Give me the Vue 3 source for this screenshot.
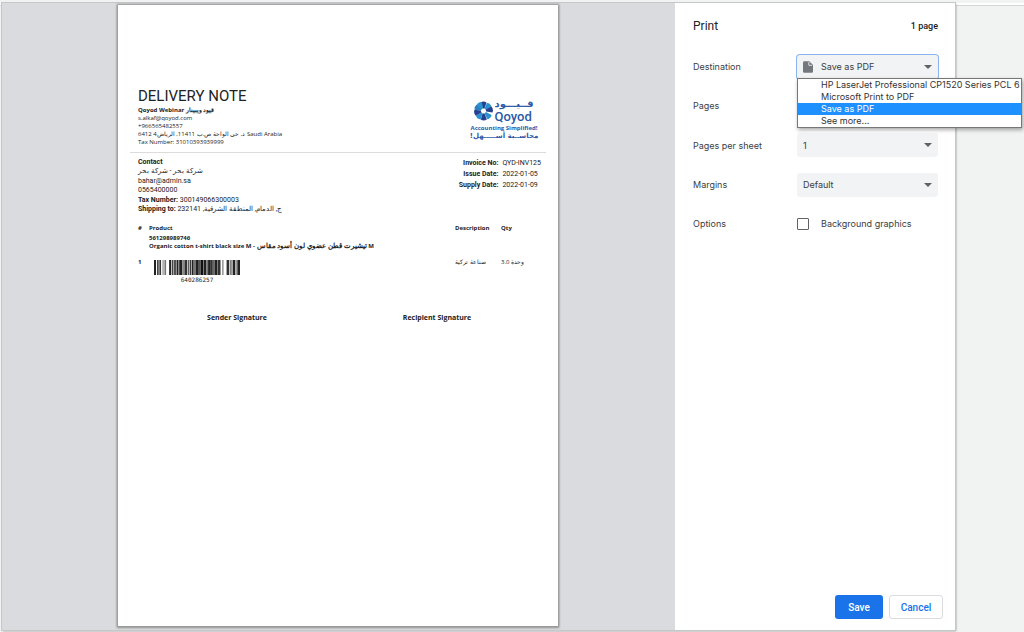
<script setup>
import { ref } from 'vue'

const printers = [
  'HP LaserJet Professional CP1520 Series PCL 6',
  'Microsoft Print to PDF',
  'Save as PDF',
  'See more...',
]
const destination = ref('Save as PDF')
const perSheet = ref('1')
const margins = ref('Default')
const background = ref(false)

// Logo petals: [rotation in degrees, colour]
const petals = [
  [0, '#263f8f'], [42, '#2a93cf'], [80, '#263f8f'], [135, '#2a93cf'],
  [178, '#263f8f'], [218, '#2a93cf'], [258, '#263f8f'], [298, '#2a7fc0'], [330, '#2a93cf'],
]

// Barcode bars: [start, width, colour]
const bars = [
  [0, 6, '#222'], [9, 5, '#444'], [16, 5, '#333'], [25, 4, '#999'], [31, 5, '#777'],
  [45, 6, '#222'], [53, 5, '#444'], [60, 5, '#333'], [67, 6, '#222'], [75, 9, '#222'],
  [84, 7, '#888'], [91, 8, '#333'], [101, 3, '#555'], [106, 4, '#333'], [112, 6, '#222'],
  [119, 5, '#777'], [124, 7, '#222'], [131, 6, '#555'], [138, 9, '#111'], [148, 8, '#222'],
  [156, 5, '#777'], [161, 8, '#222'], [169, 6, '#333'], [175, 6, '#666'], [181, 8, '#222'],
  [190, 8, '#333'], [203, 4, '#888'], [216, 8, '#333'], [227, 4, '#555'], [234, 8, '#222'],
  [243, 4, '#999'], [248, 8, '#222'],
]
</script>

<template>
  <div class="screen">
    <div class="dialog">
      <main class="preview">
        <article class="paper">
          <header class="head">
            <div class="company">
              <h1>DELIVERY NOTE</h1>
              <strong>Qoyod Webinar <bdi>قيود ويبينار</bdi></strong>
              <span>s.alkaf@qoyod.com</span>
              <span>+966565482557</span>
              <span>6412 <bdi dir="rtl">د, حي الواحة ص.ب 11411, الرياض4</bdi> Saudi Arabia</span>
              <span>Tax Number: 31010393939999</span>
            </div>
            <div class="logo">
              <div class="brand">
                <svg viewBox="-19 -20 38 40" class="mark" aria-hidden="true">
                  <path v-for="p in petals" :key="p[0]" d="M-2 -5 L-6 -17 Q0 -21 6 -17 L2 -5 Z" :transform="`rotate(${p[0]})`" :fill="p[1]" />
                </svg>
                <div class="names">
                  <span class="name-ar" lang="ar" dir="rtl">قــيـــود</span>
                  <span class="name-en">Qoyod</span>
                </div>
              </div>
              <span class="slogan">Accounting Simplified!</span>
              <span class="slogan-ar" lang="ar" dir="rtl">محاســبة أســـــهل!</span>
            </div>
          </header>

          <section class="details">
            <div class="contact">
              <strong>Contact</strong>
              <span><bdi>شركة بحر - شركة بحر</bdi></span>
              <span>bahar@admin.sa</span>
              <span>0565400000</span>
              <span><b>Tax Number:</b> 300149066300003</span>
              <span><b>Shipping to:</b> <bdi dir="rtl">ج, الدمام, المنطقة الشرقية, 232141</bdi></span>
            </div>
            <dl class="invoice">
              <dt>Invoice No:</dt><dd>QYD-INV125</dd>
              <dt>Issue Date:</dt><dd>2022-01-05</dd>
              <dt>Supply Date:</dt><dd>2022-01-09</dd>
            </dl>
          </section>

          <table class="items">
            <thead>
              <tr><th class="c-num">#</th><th>Product</th><th class="c-desc">Description</th><th class="c-qty">Qty</th></tr>
            </thead>
            <tbody>
              <tr>
                <td></td>
                <td colspan="3" class="product">561298989746<br>Organic cotton t-shirt black size M - <bdi dir="rtl">تيشيرت قطن عضوي لون أسود مقاس</bdi> M</td>
              </tr>
              <tr class="line">
                <td><b>1</b></td>
                <td>
                  <figure class="barcode">
                    <svg viewBox="0 0 256 45" preserveAspectRatio="none" role="img" aria-label="Barcode">
                      <rect v-for="b in bars" :key="b[0]" :x="b[0]" y="0" :width="b[1]" height="45" :fill="b[2]" />
                    </svg>
                    <figcaption>640286257</figcaption>
                  </figure>
                </td>
                <td><bdi>صناعة تركية</bdi></td>
                <td>3.0 <bdi>وحدة</bdi></td>
              </tr>
            </tbody>
          </table>

          <footer class="signatures">
            <span>Sender Signature</span>
            <span>Recipient Signature</span>
          </footer>
        </article>
      </main>

      <aside class="panel">
        <header class="panel-head">
          <h2>Print</h2>
          <span>1 page</span>
        </header>
        <form class="settings" @submit.prevent>
          <div class="row">
            <label for="dest">Destination</label>
            <div class="field open">
              <svg class="file" viewBox="0 0 12 14" aria-hidden="true">
                <path d="M1.5 0H7.5L12 4.5V12.5Q12 14 10.5 14H1.5Q0 14 0 12.5V1.5Q0 0 1.5 0Z" fill="#74787d" />
                <path d="M7 1V5H11" fill="none" stroke="#f1f3f4" stroke-width="1" />
              </svg>
              <select id="dest" v-model="destination" class="with-icon">
                <option v-for="p in printers" :key="p">{{ p }}</option>
              </select>
              <ul class="menu" role="listbox" aria-label="Destination">
                <li v-for="p in printers" :key="p" role="option" :aria-selected="p === destination" :class="{ active: p === destination }" @click="destination = p">{{ p }}</li>
              </ul>
            </div>
          </div>
          <div class="row">
            <span>Pages</span>
          </div>
          <div class="row tall">
            <label for="sheet">Pages per sheet</label>
            <div class="field">
              <select id="sheet" v-model="perSheet"><option>1</option><option>2</option><option>4</option></select>
            </div>
          </div>
          <div class="row">
            <label for="margins">Margins</label>
            <div class="field">
              <select id="margins" v-model="margins"><option>Default</option><option>None</option></select>
            </div>
          </div>
          <div class="row">
            <span>Options</span>
            <label class="check"><input v-model="background" type="checkbox">Background graphics</label>
          </div>
          <div class="actions">
            <button type="submit" class="save">Save</button>
            <button type="button" class="cancel">Cancel</button>
          </div>
        </form>
      </aside>
    </div>
  </div>
</template>

<style>
body {
  background: #f1f3f3;
}
</style>

<style scoped>
* {
  box-sizing: border-box;
}
.screen {
  min-height: 100vh;
  display: flex;
  padding: 3px 69px 2px 2px;
  font-family: Roboto, "Noto Sans", sans-serif;
  background: linear-gradient(#f1f3f3 3px, #fff 3px, #fff 5px, #d4d5d5 5px, #d4d5d5 6px, #f1f3f3 6px);
}
.dialog {
  flex: 1;
  display: flex;
  background: #dadbdf;
  box-shadow: 0 0 0 1px #c6c7c9, 1px 1px 2px 0 #888;
}
.preview {
  flex: 1;
  display: flex;
  justify-content: center;
  padding: 2px 1px 4px 0;
}
.paper {
  width: 440px;
  background: #fff;
  padding: 82px 12px 0;
  box-shadow: 0 0 2px 1px #999, 0 1px 2px 1px #999;
  color: #222;
  font-size: 7px;
  line-height: 8px;
}
.head {
  display: flex;
  justify-content: space-between;
  padding: 0 9px 6px 8px;
  border-bottom: 1px solid #dcdcdc;
}
.company {
  display: flex;
  flex-direction: column;
  white-space: nowrap;
  font-family: "Open Sans", "Noto Sans", sans-serif;
  font-size: 6px;
}
.product bdi {
  font-size: 7px;
  line-height: 1;
}
h1 {
  margin: 0;
  font-family: Roboto, sans-serif;
  font-size: 15px;
  line-height: 19px;
  font-weight: 400;
  color: #222;
}
.logo {
  display: flex;
  flex-direction: column;
  align-items: center;
  width: 66px;
  padding-top: 11px;
  color: #2c5aa8;
  white-space: nowrap;
}
.brand {
  display: flex;
  align-items: center;
  gap: 2px;
  height: 26px;
}
.mark {
  width: 19px;
  height: 22px;
}
.names {
  display: flex;
  flex-direction: column;
  width: 40px;
}
.name-ar {
  font: 700 10px/12px "DejaVu Sans", sans-serif;
  text-align: left;
}
.name-en {
  font: 500 13px/14px Roboto, sans-serif;
}
.slogan {
  font: 700 6px/8px "Open Sans", sans-serif;
}
.slogan-ar {
  font: 700 7px/8px "DejaVu Sans", sans-serif;
}
.details {
  display: flex;
  justify-content: space-between;
  padding: 5px 5px 0 8px;
}
.contact {
  display: flex;
  flex-direction: column;
  justify-content: space-between;
  height: 56px;
  line-height: 9px;
}
.invoice {
  display: grid;
  grid-template-columns: auto auto;
  align-content: start;
  column-gap: 4px;
  margin: 0;
  line-height: 11px;
}
dt {
  font-weight: 700;
  text-align: right;
}
dd {
  margin: 0;
}
.items {
  width: 100%;
  margin-top: 11px;
  padding-left: 8px;
  table-layout: fixed;
  border-spacing: 0;
  font-family: "Open Sans", "Noto Sans", sans-serif;
  font-size: 6px;
  line-height: 7px;
}
.items th,
.items td {
  padding: 0;
  text-align: left;
  vertical-align: top;
  white-space: nowrap;
}
.items th {
  height: 10px;
}
.c-num {
  width: 11px;
}
.c-desc {
  width: 46px;
}
.c-qty {
  width: 45px;
}
.product {
  font-weight: 700;
}
.items .line td {
  padding-top: 9px;
}
.barcode {
  margin: 1px 0 0 5px;
  width: 86px;
  text-align: center;
}
.barcode svg {
  display: block;
  width: 100%;
  height: 15px;
}
figcaption {
  font: 6px/10px "DejaVu Sans Mono", monospace;
}
.signatures {
  display: grid;
  grid-template-columns: 200px 200px;
  margin: 29px 0 0 7px;
  text-align: center;
  font-family: "Open Sans", sans-serif;
  font-weight: 700;
}
.panel {
  width: 280px;
  display: flex;
  flex-direction: column;
  background: #fff;
  color: #3c4043;
  font-family: Inter, Roboto, sans-serif;
  font-size: 9px;
}
.panel-head {
  display: flex;
  justify-content: space-between;
  align-items: center;
  height: 44px;
  padding: 1px 17px 0 18px;
}
.panel-head h2 {
  margin: 0;
  font-family: Roboto, sans-serif;
  font-size: 12px;
  font-weight: 400;
  color: #202124;
}
.panel-head span {
  font-family: Roboto, sans-serif;
  font-weight: 500;
  color: #202124;
}
.settings {
  flex: 1;
  display: flex;
  flex-direction: column;
  padding: 0 17px 11px 18px;
}
.row {
  display: grid;
  grid-template-columns: 104px 1fr;
  align-items: center;
  height: 39px;
}
.tall {
  height: 40px;
}
.field {
  position: relative;
}
select {
  display: block;
  width: 100%;
  height: 24px;
  padding: 0 6px;
  border: 0;
  border-radius: 3px;
  appearance: none;
  background: #f1f3f4;
  color: #3c4043;
  font: 9px Inter, Roboto, sans-serif;
}
.field::after {
  content: "";
  position: absolute;
  right: 6px;
  top: 10px;
  border: 4px solid transparent;
  border-top-color: #5f6368;
  border-bottom: 0;
}
.open select {
  box-shadow: 0 0 0 1px #8ab4f0;
}
.with-icon {
  padding-left: 24px;
}
.file {
  position: absolute;
  left: 6px;
  top: 6px;
  width: 10px;
  height: 12px;
}
.menu {
  position: absolute;
  z-index: 1;
  top: 23px;
  left: 0;
  width: 225px;
  margin: 0;
  padding: 0;
  list-style: none;
  background: #fff;
  border: 1px solid #777;
  box-shadow: 1px 2px 4px #0005;
  color: #333;
  line-height: 12px;
  white-space: nowrap;
}
.menu li {
  padding-left: 23px;
}
.menu .active {
  background: #1e90ff;
  color: #fff;
}
.check {
  display: flex;
  align-items: center;
  gap: 11px;
}
.check input {
  appearance: none;
  width: 12px;
  height: 12px;
  margin: 0 1px 0 0;
  border: 1px solid #5f6368;
  border-radius: 1px;
}
.actions {
  display: flex;
  justify-content: flex-end;
  gap: 6px;
  margin: auto -5px 0 0;
}
button {
  height: 24px;
  border-radius: 3px;
  font: 500 10px Roboto, sans-serif;
}
.save {
  width: 48px;
  border: 0;
  background: #1a73e8;
  color: #fff;
}
.cancel {
  width: 54px;
  border: 1px solid #dadce0;
  background: #fff;
  color: #1a73e8;
}
</style>
